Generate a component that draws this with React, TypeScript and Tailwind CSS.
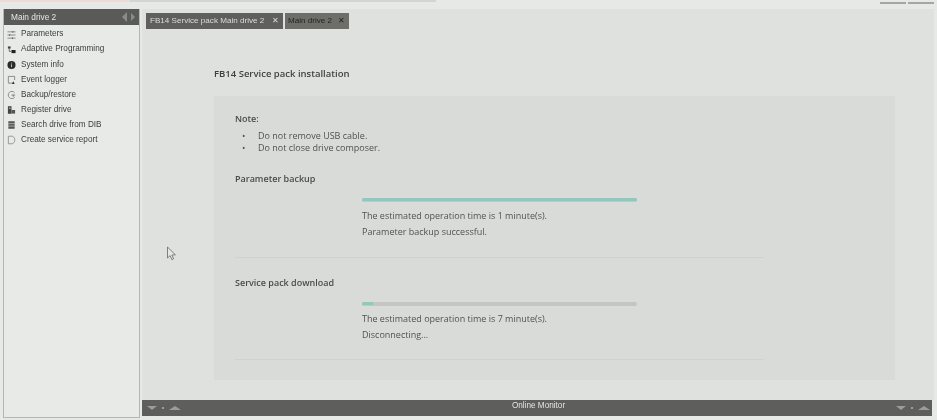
const menuItems = [
  { label: 'Parameters', icon: 'sliders' },
  { label: 'Adaptive Programming', icon: 'blocks' },
  { label: 'System info', icon: 'info' },
  { label: 'Event logger', icon: 'logger' },
  { label: 'Backup/restore', icon: 'backup' },
  { label: 'Register drive', icon: 'register' },
  { label: 'Search drive from DIB', icon: 'search' },
  { label: 'Create service report', icon: 'report' },
]

const MenuIcon = ({ name }: { name: string }) => {
  return (
    <svg width="9" height="10" viewBox="0 0 10 10" className="shrink-0" fill="none" stroke="#555" strokeWidth="0.9">
      {name === 'sliders' && (
        <>
          <path d="M0.5 1.5h9M0.5 5h9M0.5 8.5h9" stroke="#777" />
          <path d="M6.5 0.5v2M3 4v2M6 7.5v2" />
        </>
      )}
      {name === 'blocks' && (
        <>
          <rect x="1" y="1" width="3" height="2.5" fill="#444" stroke="none" />
          <rect x="5" y="5" width="4.5" height="3.5" fill="#222" stroke="none" />
          <path d="M2.5 3.5V6.5H5" />
        </>
      )}
      {name === 'info' && (
        <>
          <circle cx="5" cy="5" r="4.5" fill="#2b2b2b" stroke="none" />
          <path d="M5 4.2v3.2M5 2.4v1" stroke="#ddd" />
        </>
      )}
      {name === 'logger' && (
        <>
          <path d="M7.5 8.5H1.5V1H8.5V5" stroke="#777" />
          <path d="M5.5 9.5 7 6.5 8.5 9.5Z" fill="#333" stroke="none" />
        </>
      )}
      {name === 'backup' && (
        <>
          <path d="M8.5 2.5A4 4 0 1 0 8.5 7.5" stroke="#777" />
          <path d="M5 5h4M7 5v2" stroke="#666" />
        </>
      )}
      {name === 'register' && (
        <>
          <rect x="1" y="0.8" width="4" height="8.4" fill="#444" stroke="none" />
          <rect x="5" y="5" width="4" height="4" fill="#555" stroke="none" />
          <path d="M2 3h2" stroke="#ddd" />
        </>
      )}
      {name === 'search' && (
        <>
          <rect x="1.5" y="0.8" width="7" height="8.4" fill="#555" stroke="none" />
          <path d="M1.5 3.5h7M1.5 6.2h7" stroke="#ddd" strokeWidth="0.7" />
        </>
      )}
      {name === 'report' && (
        <path d="M1.5 0.8H6.5L8.5 3V6.5L6.5 9.2H1.5Z" stroke="#888" />
      )}
    </svg>
  )
}

const CollapseArrows = () => (
  <div className="flex items-center gap-[5px]">
    <div className="w-0 h-0 border-l-[5px] border-r-[5px] border-t-[4px] border-l-transparent border-r-transparent border-t-[#9c9d9b]" />
    <div className="w-[2px] h-[2px] bg-[#9c9d9b]" />
    <div className="w-0 h-0 border-l-[6px] border-r-[6px] border-b-[4px] border-l-transparent border-r-transparent border-b-[#9c9d9b]" />
  </div>
)

const ProgressBlock = ({
  percent,
  time,
  status,
  textClass,
}: {
  percent: number
  time: string
  status: string
  textClass: string
}) => (
  <div className="ml-[127px] w-[275px]">
    <div className="h-[4px] rounded-sm bg-[#c4c6c4] overflow-hidden">
      <div className="h-[3px] bg-[#93c6bc]" style={{ width: `${percent}%` }} />
    </div>
    <p className={`${textClass} leading-[16px] whitespace-nowrap`}>{time}</p>
    <p className="leading-[16px] whitespace-nowrap">{status}</p>
  </div>
)

export default function App() {
  return (
    <div className="relative w-[937px] h-[420px] overflow-hidden bg-[#e7e9e7] font-['Liberation_Sans',sans-serif]">
      {/* top strip */}
      <div className="flex h-[9px] items-start">
        <div className="w-[130px] h-[2px] bg-[#eedbd8]" />
        <div className="w-[306px] h-[2px] bg-[#d4d5d3]" />
        <div className="flex-1" />
        <div className="flex gap-[2px] mt-[2px] mr-[3px]">
          <div className="w-[26px] h-[2px] bg-[#a5a6a4]" />
          <div className="w-[26px] h-[2px] bg-[#a5a6a4]" />
        </div>
      </div>

      <div className="flex h-[411px] pl-[3px]">
        {/* sidebar */}
        <aside className="w-[137px] h-[409px] bg-[#e8eae8] border border-t-0 border-[#b4b6b4] flex flex-col blur-[0.5px]">
          <div className="h-[16px] bg-[#5a5a58] flex items-center justify-between pl-[7px] pr-[4px] text-[8.3px] text-[#e6e6e4]">
            <span>Main drive 2</span>
            <div className="flex items-center gap-[4px]">
              <div className="w-0 h-0 border-y-[5px] border-r-[5px] border-y-transparent border-r-[#8b8b89]" />
              <div className="w-0 h-0 border-y-[4px] border-l-[4px] border-y-transparent border-l-[#8b8b89]" />
            </div>
          </div>
          <ul className="pt-[2px] text-[8.2px] text-[#3c3c3c]">
            {menuItems.map((item) => (
              <li key={item.label} className="flex h-[15.1px] items-center gap-[5px] pl-[3px]">
                <MenuIcon name={item.icon} />
                <span>{item.label}</span>
              </li>
            ))}
          </ul>
        </aside>

        {/* main */}
        <div className="ml-[2px] w-[792px] flex flex-col">
          <main className="h-[391px] bg-[#dfe1df] pl-[4px] pt-[4px] flex flex-col">
            <div className="flex gap-[2px] text-[8.1px] blur-[0.5px]">
              <div className="h-[16px] w-[137px] bg-[#5f5f5d] text-[#dcdcda] flex items-center justify-between pl-[4px] pr-[4px]">
                <span>FB14 Service pack Main drive 2</span>
                <span className="text-[8px] leading-none">✕</span>
              </div>
              <div className="h-[16px] w-[64px] bg-[#6d6d6a] text-[#232323] flex items-center justify-between pl-[3px] pr-[4px]">
                <span>Main drive 2</span>
                <span className="text-[8px] leading-none">✕</span>
              </div>
            </div>

            <div className="ml-[68px] mt-[38px] font-['Open_Sans',sans-serif] text-[#505250] text-[9px] blur-[0.5px]">
              <h1 className="font-semibold text-[9.5px] leading-[14px] text-[#3f403f]">FB14 Service pack installation</h1>

              <section className="mt-[15px] w-[681px] h-[284px] bg-[#d9dbd9] pl-[21px] pt-[17px]">
                <h2 className="font-semibold text-[#4a4a4a] leading-[12px]">Note:</h2>
                <ul className="mt-[5px] leading-[12px]">
                  <li className="flex"><span className="w-[23px] pl-[7px]">•</span>Do not remove USB cable.</li>
                  <li className="flex"><span className="w-[23px] pl-[7px]">•</span>Do not close drive composer.</li>
                </ul>

                <h2 className="mt-[18px] font-semibold text-[#4a4a4a] leading-[14px]">Parameter backup</h2>
                <div className="mt-[12px]">
                  <ProgressBlock percent={100} textClass="mt-[6px]" time="The estimated operation time is 1 minute(s)." status="Parameter backup successful." />
                </div>
                <div className="mt-[17px] w-[529px] h-px bg-[#d0d2d0]" />

                <h2 className="mt-[18px] font-semibold text-[#4a4a4a] leading-[14px]">Service pack download</h2>
                <div className="mt-[12px]">
                  <ProgressBlock percent={4} textClass="mt-[5px]" time="The estimated operation time is 7 minute(s)." status="Disconnecting..." />
                </div>
                <div className="mt-[16px] w-[529px] h-px bg-[#d0d2d0]" />
              </section>
            </div>
          </main>

          {/* online monitor bar */}
          <div className="h-[16px] w-[790px] bg-[#5e5f5d] flex items-center justify-between pl-[5px] pr-[2px] blur-[0.4px]">
            <CollapseArrows />
            <span className="text-[8.2px] text-[#e4e4e2] -mt-[4px]">Online Monitor</span>
            <CollapseArrows />
          </div>
        </div>
      </div>

      {/* mouse cursor */}
      <svg className="absolute left-[166px] top-[246px]" width="12" height="16" viewBox="0 0 12 16">
        <path d="M1.5 1v11l2.6-2.4 1.7 4 1.8-.8-1.7-3.8 3.5-.2Z" fill="#e4e6e4" stroke="#666" strokeWidth="0.8" />
      </svg>
    </div>
  )
}
